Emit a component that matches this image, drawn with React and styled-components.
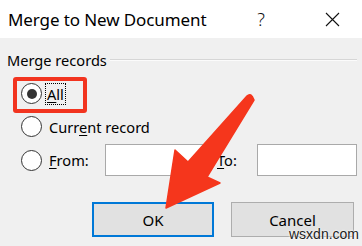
import React from "react";
import styled, { createGlobalStyle } from "styled-components";

const Global = createGlobalStyle`
  html, body { margin: 0; padding: 0; background: #f0f0f0; }
  body { font-family: "Noto Sans", "Open Sans", sans-serif; }
`;

const Dialog = styled.div`
  position: relative;
  width: 362px;
  height: 246px;
  overflow: hidden;
  background: #f0f0f0;
  color: #000;
`;

const TitleBar = styled.div`
  height: 38px;
  background: #fff;
  display: flex;
  align-items: center;
  padding-left: 8px;
  padding-right: 6px;
`;

const Title = styled.div`
  font-size: 17px;
  flex: 1;
  letter-spacing: -0.1px;
`;

const TitleButton = styled.div`
  width: ${(p) => p.$w}px;
  margin-right: ${(p) => p.$mr ?? 0}px;
  display: flex;
  justify-content: center;
  align-items: center;
  font-size: 18px;
  font-weight: 300;
  color: #111;
`;

const Body = styled.div`
  padding-top: 12px;
`;

const GroupHeader = styled.div`
  display: flex;
  align-items: center;
  height: 20px;
  padding-left: 7px;
  padding-right: 5px;
  gap: 3px;
`;

const Legend = styled.span`
  font-size: 14.6px;
`;

const GroupLine = styled.div`
  flex: 1;
  height: 1px;
  background: #d6d6d6;
  border-bottom: 1px solid #fbfbfb;
`;

const Options = styled.div`
  margin-top: 7px;
  padding-left: 21px;
`;

const Row = styled.div`
  display: flex;
  align-items: center;
  height: ${(p) => p.$h}px;
`;

const Radio = styled.span`
  width: 19px;
  height: 19px;
  border: 1px solid #333;
  border-radius: 50%;
  background: #fff;
  display: flex;
  align-items: center;
  justify-content: center;
  flex: none;
  &::after {
    content: "";
    display: ${(p) => (p.$checked ? "block" : "none")};
    width: 10px;
    height: 10px;
    border-radius: 50%;
    background: #333;
  }
`;

const Label = styled.span`
  font-size: 14.6px;
  margin-left: ${(p) => p.$ml ?? 5}px;
  padding: 0 1px;
  line-height: 20px;
  border: 1px ${(p) => (p.$focus ? "dotted #000" : "solid transparent")};
  width: ${(p) => (p.$w ? p.$w + "px" : "auto")};
  u { text-decoration-thickness: 1px; text-underline-offset: 2px; }
`;

const Input = styled.div`
  width: 98px;
  height: 30px;
  background: #fff;
  border: 1px solid #a9a9a9;
  margin-left: ${(p) => p.$ml}px;
`;

const Buttons = styled.div`
  display: flex;
  justify-content: flex-end;
  gap: 17px;
  padding-right: 8px;
  margin-top: 25px;
`;

const Button = styled.div`
  width: ${(p) => p.$w}px;
  height: 35px;
  box-sizing: border-box;
  background: #e1e1e1;
  border: ${(p) => (p.$default ? "2px solid #0078d7" : "1px solid #adadad")};
  display: flex;
  align-items: center;
  justify-content: center;
  font-size: 15px;
`;

const Highlight = styled.div`
  position: absolute;
  left: 13px;
  top: 77px;
  width: 74px;
  height: 36px;
  box-sizing: border-box;
  border: 4px solid #f2341f;
  border-radius: 3px;
`;

const ArrowSvg = styled.svg`
  position: absolute;
  left: 0;
  top: 0;
  pointer-events: none;
`;

const Watermark = styled.div`
  position: absolute;
  left: 289px;
  top: 226px;
  font-size: 14px;
  font-family: "Liberation Sans", Arial, sans-serif;
  color: #222;
  text-shadow: 0 0 2px #fff, 0 0 2px #fff;
`;

export default function App() {
  return (
    <>
      <Global />
      <Dialog>
        <TitleBar>
          <Title>Merge to New Document</Title>
          <TitleButton $w={20} $mr={38}>?</TitleButton>
          <TitleButton $w={47}>
            <svg width="15" height="15" viewBox="0 0 15 15">
              <path d="M1 1 L14 14 M14 1 L1 14" stroke="#111" strokeWidth="1.1" />
            </svg>
          </TitleButton>
        </TitleBar>
        <Body>
          <GroupHeader>
            <Legend>Merge records</Legend>
            <GroupLine />
          </GroupHeader>
          <Options>
            <Row $h={33}>
              <Radio $checked />
              <Label $focus $ml={3}>
                <u>A</u>ll
              </Label>
            </Row>
            <Row $h={33}>
              <Radio />
              <Label>
                Curr<u>e</u>nt record
              </Label>
            </Row>
            <Row $h={34}>
              <Radio />
              <Label $w={54}>
                <u>F</u>rom:
              </Label>
              <Input $ml={0} />
              <Label $ml={10} $w={26}>
                <u>T</u>o:
              </Label>
              <Input $ml={12} />
            </Row>
          </Options>
          <Buttons>
            <Button $w={122} $default>OK</Button>
            <Button $w={123}>Cancel</Button>
          </Buttons>
        </Body>
        <Highlight />
        <ArrowSvg width="362" height="246" viewBox="0 0 362 246">
          <path
            d="M247 96 Q251 92 254 100 L207 177 L220 183 L166 208 L175 150 L188 162 Z"
            fill="#f5361c"
            stroke="#f5361c"
            strokeWidth="1.5"
            strokeLinejoin="round"
          />
        </ArrowSvg>
        <Watermark>wsxdn.com</Watermark>
      </Dialog>
    </>
  );
}
